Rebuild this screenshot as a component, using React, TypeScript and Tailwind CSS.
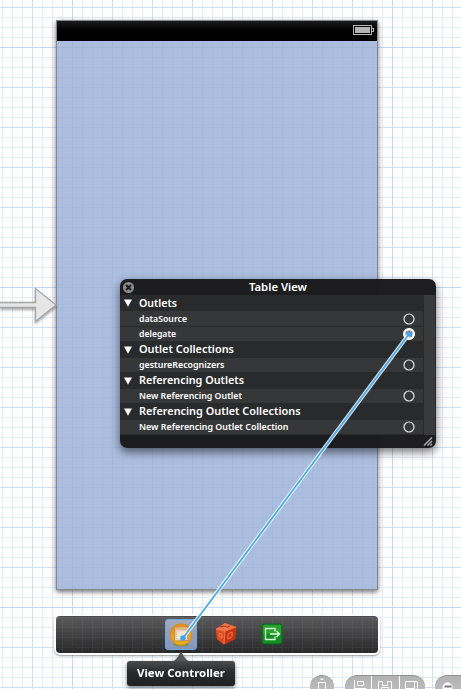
import React from 'react';

const range = (n: number) => Array.from({ length: n }, (_, i) => i);

function CanvasGrid({ overlay = false }: { overlay?: boolean }) {
  const minor = overlay ? '#a5b8d8' : '#e2edfa';
  const major = overlay ? '#9fb3d7' : '#cfe1f8';
  const strong = overlay ? '#9bb0d6' : '#c0d8f7';
  const xs = range(46).map((i) => 2 + i * 10);
  const ys = range(69).map((i) => 7 + i * 10);
  const isMajor = (v: number, first: number) => (v - first) % 40 === 0;
  return (
    <svg className="absolute inset-0" width="461" height="689" shapeRendering="crispEdges">
      {xs.map((x) => <rect key={x} x={x} y="0" width="1" height="689" fill={minor} />)}
      {ys.map((y) => <rect key={y} x="0" y={y} width="461" height="1" fill={minor} />)}
      {xs.filter((x) => isMajor(x, 32)).map((x) => (
        <rect key={x} x={x} y="0" width="1" height="689" fill={x === 72 || x === 392 ? strong : major} />
      ))}
      {ys.filter((y) => isMajor(y, 7)).map((y) => (
        <rect key={y} x="0" y={y} width="461" height="1" fill={y === 47 || y === 287 || y === 607 ? strong : major} />
      ))}
    </svg>
  );
}

function Phone() {
  return (
    <div className="absolute left-[56px] top-[20px] flex h-[570px] w-[322px] flex-col border border-[#85878a] bg-[#abbedf] shadow-[0_2px_5px_rgba(0,0,0,0.55)]">
      <div className="pointer-events-none absolute inset-0 overflow-hidden">
        <div className="absolute -left-[57px] -top-[21px] h-[689px] w-[461px] opacity-50">
          <CanvasGrid overlay />
        </div>
      </div>
      <div className="relative flex h-[20px] shrink-0 items-start justify-end bg-linear-to-b from-[#1c1c1c] via-[#020202] via-50% to-black pr-[3px] pt-[4px]">
        <svg width="21" height="10" shapeRendering="crispEdges">
          <rect x="0.5" y="0.5" width="18" height="9" fill="none" stroke="#b8b8b8" />
          <rect x="2" y="2" width="15" height="6" fill="#b4b4b4" />
          <path d="M19 3.5h1.5v3H19" fill="none" stroke="#b0b0b0" />
        </svg>
      </div>
    </div>
  );
}

function EntryArrow() {
  return (
    <svg className="absolute left-0 top-[280px] drop-shadow-[0_2px_1px_rgba(0,0,0,0.3)]" width="60" height="50">
      <path d="M-2 22.5H35.5V8.5L56 25L35.5 41.5V27.5H-2Z" fill="#e6e6e6" stroke="#a5a5a5" strokeWidth="1.3" />
    </svg>
  );
}

function Header({ label, width, baseline = 11.4 }: { label: string; width: number; baseline?: number }) {
  return (
    <div className="flex h-[16px] items-center bg-[#2a2b2c]/98 pl-[4px]">
      <svg width="15" height="10" className="shrink-0">
        <path d="M0 1.5H8L4 8.8Z" fill="#fff" />
      </svg>
      <svg width="200" height="16" className="shrink-0 overflow-visible">
        <text x="0" y={baseline} textLength={width} lengthAdjust="spacingAndGlyphs" fill="#fff" className="font-['Noto_Sans','Open_Sans',sans-serif] text-[11.3px] font-semibold">{label}</text>
      </svg>
    </div>
  );
}

function Outlet({ label, width, tall = false }: { label: string; width: number; tall?: boolean }) {
  return (
    <div className={`flex items-start justify-between border-b border-[#29292a] bg-[#373839]/98 pl-[19px] pr-[8px] ${tall ? 'h-[16px]' : 'h-[15px]'}`}>
      <svg width="200" height="14" className="shrink-0 overflow-visible">
        <text x="0" y={tall ? 11 : 10.2} textLength={width} lengthAdjust="spacingAndGlyphs" fill="#fff" className="font-['Noto_Sans','Open_Sans',sans-serif] text-[9.3px] font-semibold">{label}</text>
      </svg>
      <svg width="14" height="14" className="shrink-0 overflow-visible">
        <circle cx="8" cy={tall ? 8 : 7} r="5" fill="none" stroke="#e4e4e4" strokeWidth="1.2" />
      </svg>
    </div>
  );
}

function OutletPanel() {
  return (
    <div className="absolute left-[120px] top-[279px] flex h-[169px] w-[316px] flex-col overflow-hidden rounded-[7px] bg-[#191a1c]/98 shadow-[0_4px_10px_rgba(0,0,0,0.55)]">
      <div className="flex h-[16px] shrink-0 items-center">
        <svg width="129" height="16" className="shrink-0">
          <circle cx="8.5" cy="8.5" r="5.5" fill="#8b8c8e" />
          <path d="M6 6L11 11M11 6L6 11" stroke="#1b1b1c" strokeWidth="2" />
        </svg>
        <svg width="70" height="16">
          <text x="0" y="12" textLength="58" lengthAdjust="spacingAndGlyphs" fill="#fff" className="font-['Noto_Sans','Open_Sans',sans-serif] text-[11px] font-semibold">Table View</text>
        </svg>
      </div>
      <div className="flex h-[140px] shrink-0">
        <div className="w-[303px]">
          <Header label="Outlets" width={38} baseline={12} />
          <Outlet label="dataSource" width={48} tall />
          <Outlet label="delegate" width={37} />
          <Header label="Outlet Collections" width={95} />
          <Outlet label="gestureRecognizers" width={85.5} />
          <Header label="Referencing Outlets" width={105} />
          <Outlet label="New Referencing Outlet" width={103} />
          <Header label="Referencing Outlet Collections" width={161.5} />
          <Outlet label="New Referencing Outlet Collection" width={149.5} />
        </div>
        <div className="w-[13px] border-x border-[#28292a] bg-[#3a3a3a]" />
      </div>
      <div className="flex flex-1 items-start justify-end pr-[2px]">
        <svg width="11" height="12">
          <path d="M1 10.5L9 2.5M4.5 10.5L9 6M7.5 10.5L9 9" stroke="#b5b5b5" strokeWidth="1.2" />
        </svg>
      </div>
    </div>
  );
}

function Dock() {
  return (
    <div className="absolute left-[54px] top-[614px] h-[41px] w-[326px] rounded-[6px] bg-white p-[2px] shadow-[0_1px_2px_rgba(0,0,0,0.4)]">
      <div className="relative flex h-[37px] items-start justify-start overflow-hidden rounded-[4px] border-t border-[#4a4a4a] bg-linear-to-b from-[#5b5b5b] to-[#292929] pl-[109px] pt-[2px]">
        <div className="pointer-events-none absolute -left-[56px] -top-[617px] h-[689px] w-[461px] opacity-[0.07]">
          <CanvasGrid overlay />
        </div>
        <div className="relative flex h-[31px] w-[32px] shrink-0 items-center justify-center rounded-[3px] border border-[#6ca7e6] bg-linear-to-b from-[#a0abc1] to-[#8295ba]">
          <svg width="24" height="26" className="shrink-0">
            <defs>
              <linearGradient id="gold" x2="0" y2="1">
                <stop stopColor="#e08f18" />
                <stop offset="1" stopColor="#efb014" />
              </linearGradient>
            </defs>
            <ellipse cx="12" cy="22.5" rx="8" ry="2" fill="#739360" />
            <circle cx="12" cy="12.5" r="10.8" fill="url(#gold)" stroke="#d08a1a" strokeWidth="0.8" />
            <path d="M6 5.5L18 5L19 18.5L5.5 19Z" fill="#ecd9b8" stroke="#b87f38" strokeWidth="0.8" />
            <path d="M6 5.5L18 5V8H6Z" fill="#dfb585" />
            <rect x="7.5" y="9" width="9" height="8" fill="#f4e6cd" stroke="#d3b588" strokeWidth="0.8" strokeDasharray="1 1" />
          </svg>
        </div>
        <svg width="22" height="24" className="relative ml-[18px] mt-[3px] shrink-0">
          <path d="M1 7L10 1L21 5L20 17L9 22.5L2 17Z" fill="#d9411c" />
          <path d="M1 7L10 1L21 5L10 9Z" fill="#ec7448" />
          <path d="M1 7L10 9L9 22.5L2 17Z" fill="#e24b22" />
          <path d="M10 9L21 5L20 17L9 22.5Z" fill="#c73414" />
          <path d="M1 7L10 9L21 5M10 9L9 22M10 1L9 5L13 7" fill="none" stroke="#f5875b" strokeWidth="0.8" />
          <path d="M4 11L7 12V16L4 14ZM13 12L17 10V15L13 17Z" fill="none" stroke="#f17949" strokeWidth="1" />
          <path d="M5 5L9 4L12 5L15 4" fill="none" stroke="#a92d13" strokeWidth="1" />
        </svg>
        <svg width="22" height="22" className="relative ml-[24px] mt-[4px] shrink-0">
          <rect x="1" y="1" width="20" height="20" rx="2" fill="#128f23" stroke="#07651a" />
          <rect x="2" y="2" width="18" height="9" rx="1" fill="#28a22f" />
          <path d="M14 8.5V5.5H4.5V16.5H14V13.5" fill="none" stroke="#d8f2d7" strokeWidth="1.3" />
          <path d="M9 11H18M15.5 8L18.5 11L15.5 14" fill="none" stroke="#e4f6e2" strokeWidth="1.3" />
        </svg>
      </div>
    </div>
  );
}

function Tooltip() {
  return (
    <div className="absolute left-[127px] top-[652px] flex w-[108px] flex-col items-center drop-shadow-[0_2px_2px_rgba(0,0,0,0.5)]">
      <svg width="16" height="9" className="shrink-0">
        <path d="M0 9C4 8 6 2 8 0C10 2 12 8 16 9Z" fill="#555657" />
      </svg>
      <div className="flex h-[25px] w-full items-center justify-center rounded-[3px] bg-linear-to-b from-[#4b4c4d] via-[#292a2b] via-45% to-[#202122]">
        <svg width="88" height="20">
          <text x="0" y="13" textLength="88" lengthAdjust="spacingAndGlyphs" fill="#fff" className="font-['Noto_Sans','Open_Sans',sans-serif] text-[10.5px] font-bold">View Controller</text>
        </svg>
      </div>
    </div>
  );
}

function ZoomControls() {
  const pill = 'h-[24px] shrink-0 border-t border-[#929292] bg-linear-to-b from-[#b2b2b2] to-[#c2c2c2]';
  return (
    <div className="absolute left-[310px] top-[675px] flex h-[14px] w-[151px] overflow-hidden">
      <div className={`${pill} flex w-[24px] justify-center rounded-full`}>
        <svg width="12" height="14">
          <path d="M4 4L6 2L8 4Z" fill="#fff" />
          <path d="M2.5 15V6.5H9.5V15" fill="none" stroke="#fff" />
        </svg>
      </div>
      <div className={`${pill} ml-[11px] flex w-[80px] rounded-full`}>
        <svg width="26" height="14">
          <path d="M9.5 4V15M12.5 5.5H18.5V9.5H12.5ZM10 12.5H21V15" fill="none" stroke="#fff" />
        </svg>
        <svg width="28" height="14" className="border-l border-white">
          <path d="M6.5 15V5.5H10.5V9.5H15.5V5.5H19.5V15M9.5 15V11.5H16.5V15" fill="none" stroke="#fff" />
        </svg>
        <svg width="26" height="14" className="border-l border-white">
          <path d="M5.5 15V5.5H17.5V15M14.5 5V15M5 12.5H14" fill="none" stroke="#fff" />
        </svg>
      </div>
      <div className={`${pill} ml-[10px] w-[50px] rounded-full`}>
        <svg width="26" height="14">
          <circle cx="12.5" cy="11.5" r="5" fill="#fff" />
          <path d="M9.5 10.5H16.5" stroke="#777" strokeWidth="2" />
        </svg>
      </div>
    </div>
  );
}

function Connection() {
  return (
    <svg className="pointer-events-none absolute inset-0" width="461" height="689">
      <circle cx="409" cy="334" r="4.8" fill="#555" stroke="#fff" strokeWidth="2.5" />
      <circle cx="409" cy="334" r="3" fill="none" stroke="#ddd" strokeDasharray="1.5 1.5" />
      <path d="M409 334L183 638" stroke="#fff" strokeOpacity="0.85" strokeWidth="3.8" />
      <path d="M409 334L183 638" stroke="#3aaafb" strokeWidth="1.7" />
      <rect x="407" y="332" width="4.5" height="4.5" rx="1" fill="#35aaff" />
      <circle cx="183" cy="638" r="2.7" fill="#35a6f8" />
    </svg>
  );
}

export default function App() {
  return (
    <main className="relative h-[689px] w-[461px] overflow-hidden bg-white">
      <CanvasGrid />
      <Phone />
      <EntryArrow />
      <OutletPanel />
      <Dock />
      <ZoomControls />
      <Tooltip />
      <Connection />
    </main>
  );
}
